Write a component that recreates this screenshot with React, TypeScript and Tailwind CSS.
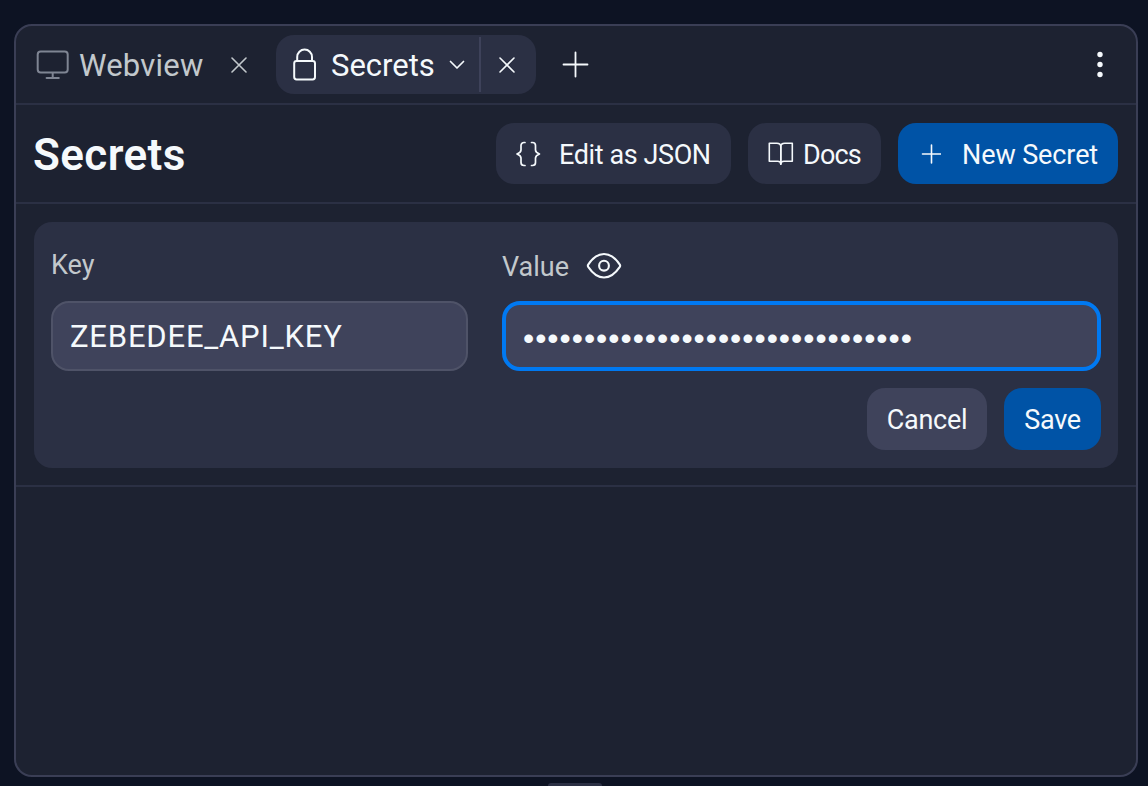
import type { ReactNode } from "react";

type LabelProps = { className: string; children: ReactNode };

function Label({ className, children }: LabelProps) {
  return <span className={`block shrink-0 whitespace-nowrap ${className}`}>{children}</span>;
}

function CloseIcon() {
  return (
    <svg width="16" height="16" viewBox="0 0 16 16" fill="none" stroke="currentColor" strokeWidth="1.6" strokeLinecap="round">
      <path d="M1 1 15 15M15 1 1 15" />
    </svg>
  );
}

function MonitorIcon() {
  return (
    <svg width="33" height="30" viewBox="0 0 33 30" fill="none" stroke="currentColor" strokeWidth="2" strokeLinecap="round">
      <rect x="1.7" y="1.4" width="30" height="21.2" rx="3" />
      <path d="M16.7 23v5M10.6 28h12.2" />
    </svg>
  );
}

function LockIcon() {
  return (
    <svg width="24" height="34" viewBox="0 0 24 34" fill="none" stroke="currentColor" strokeWidth="2">
      <rect x="1.2" y="12.9" width="20.8" height="18.6" rx="2.4" />
      <path d="M4.2 12.900V9a7.400 7.400 0 0 1 14.800 0v3.900" />
    </svg>
  );
}

function BracesIcon() {
  return (
    <svg width="25" height="26" viewBox="0 0 25 26" fill="none" stroke="currentColor" strokeWidth="1.7" strokeLinecap="round" strokeLinejoin="round">
      <path d="M9 1.500H8a3 3 0 0 0-3 3V9c0 2-1.500 3-4 4 2.500 1 4 2 4 4v4.500a3 3 0 0 0 3 3h1" />
      <path d="M15.500 1.500h1a3 3 0 0 1 3 3V9c0 2 1.500 3 4 4-2.500 1-4 2-4 4v4.500a3 3 0 0 1-3 3h-1" />
    </svg>
  );
}

function BookIcon() {
  return (
    <svg width="26" height="24" viewBox="0 0 26 24" fill="none" stroke="currentColor" strokeWidth="1.6" strokeLinecap="round" strokeLinejoin="round">
      <path d="M1.300 1.200h7.500c2.300 0 4 1.500 4 3.500v17.600c0-1.800-1.200-3-3.200-3H1.300Z" />
      <path d="M24.300 1.200h-7.500c-2.300 0-4 1.500-4 3.500v17.600c0-1.800 1.200-3 3.200-3h8.300Z" />
    </svg>
  );
}

function EyeIcon() {
  return (
    <svg width="36" height="27" viewBox="0 0 36 27" fill="none" stroke="currentColor" strokeWidth="2.1" strokeLinejoin="round">
      <path d="M2.200 14.800Q1.500 13.700 2.200 12.600C7 5.500 11.500 2 18 2S29 5.500 33.800 12.600Q34.500 13.700 33.800 14.800C29 21.900 24.500 25.500 18 25.500S7 21.900 2.200 14.800Z" />
      <circle cx="18" cy="13.700" r="4.900" />
    </svg>
  );
}

function Tabs() {
  return (
    <header className="flex h-[79px] shrink-0 items-center border-b-2 border-[#2b3044] pl-5 pr-8">
      <div className="flex h-full w-[240px] items-center text-[#c2c8cc]">
        <span className="w-[43px] text-[#7f8593]"><MonitorIcon /></span>
        <Label className="w-[152px] pt-[3px] text-[31px] tracking-[0.2px]">Webview</Label>
        <CloseIcon />
      </div>
      <div className="flex h-[59px] w-[260px] items-center rounded-[18px] bg-[#2b3044]">
        <div className="flex h-full w-[203px] items-center pl-[17px]">
          <span className="w-[38px]"><LockIcon /></span>
          <Label className="w-[117px] pt-[3px] text-[31px]">Secrets</Label>
          <svg width="17" height="10" viewBox="0 0 17 10" fill="none" stroke="currentColor" strokeWidth="1.7" strokeLinecap="round" strokeLinejoin="round">
            <path d="m2.500 1.500 6.500 6.500 6.500-6.500" />
          </svg>
        </div>
        <div className="flex h-[55px] grow items-center border-l-2 border-[#3e425a] pl-[18px]"><CloseIcon /></div>
      </div>
      <svg className="ml-[26px]" width="27" height="27" viewBox="0 0 27 27" fill="none" stroke="currentColor" strokeWidth="1.800" strokeLinecap="round">
        <path d="M13.500 1.500v24M1.500 13.500h24" />
      </svg>
      <svg className="ml-auto" width="8" height="27" viewBox="0 0 8 27" fill="currentColor">
        <circle cx="4" cy="3.500" r="2.700" /><circle cx="4" cy="13.500" r="2.700" /><circle cx="4" cy="23.500" r="2.700" />
      </svg>
    </header>
  );
}

function Toolbar() {
  return (
    <div className="flex h-[99px] shrink-0 items-center border-b-2 border-[#2b3044] pl-[17px] pr-[18px] text-[27px]">
      <h1 className="pt-[3px] text-[44px] font-semibold tracking-[0.4px]">Secrets</h1>
      <div className="ml-auto flex gap-[17px]">
        <button className="flex h-[61px] w-[235px] items-center rounded-[18px] bg-[#2b3044] pl-5">
          <span className="w-[43px]"><BracesIcon /></span>
          <Label className="pt-[3px] tracking-[-0.4px]">Edit as JSON</Label>
        </button>
        <button className="flex h-[61px] w-[133px] items-center rounded-[18px] bg-[#2b3044] pl-5">
          <span className="w-[35px]"><BookIcon /></span>
          <Label className="pt-[3px] tracking-[-0.8px]">Docs</Label>
        </button>
        <button className="flex h-[61px] w-[220px] items-center rounded-[18px] bg-[#0053a6] pl-[23px]">
          <svg className="mr-[21px]" width="20" height="20" viewBox="0 0 20 20" fill="none" stroke="currentColor" strokeWidth="1.600" strokeLinecap="round">
            <path d="M10.500 1v18M1.500 10h18" />
          </svg>
          <Label className="pt-[3px] tracking-[-0.1px]">New Secret</Label>
        </button>
      </div>
    </div>
  );
}

function SecretForm() {
  return (
    <section className="h-[283px] shrink-0 border-b-2 border-[#2b3044] px-[18px] pt-[18px]">
      <div className="flex h-[246px] flex-col rounded-[18px] bg-[#2b3044] px-[17px] text-[27px]">
        <div className="flex h-[79px] items-center text-[#c2c8cc]">
          <Label className="w-[451px] pt-[7px]">Key</Label>
          <Label className="w-[84px] pt-[11px]">Value</Label>
          <span className="pt-2 text-[#f5f9fc]"><EyeIcon /></span>
        </div>
        <div className="flex h-[70px] gap-[34px]">
          <div className="flex w-[417px] items-center rounded-[18px] border-2 border-[#4f5368] bg-[#3f435b] pl-[17px] text-[31px]">
            <Label className="pt-[3px] tracking-[0.8px]">ZEBEDEE_API_KEY</Label>
          </div>
          <div className="flex grow items-center rounded-[18px] border-4 border-[#0079f2] bg-[#3f435b] pl-[17px]">
            <Label className="pt-[3px] font-['Liberation_Sans',sans-serif] text-[32px] tracking-[0.98px]">••••••••••••••••••••••••••••••••</Label>
          </div>
        </div>
        <div className="mt-[17px] flex justify-end gap-[17px]">
          <button className="h-[62px] w-[120px] rounded-[18px] bg-[#3f435b] pt-[2px] tracking-[-0.3px]">Cancel</button>
          <button className="h-[62px] w-[97px] rounded-[18px] bg-[#0053a6] pt-[2px] tracking-[-0.3px]">Save</button>
        </div>
      </div>
    </section>
  );
}

export default function App() {
  return (
    <div className="flex h-[786px] w-[1148px] flex-col overflow-hidden bg-[#0d1323] pl-[14px] pt-6 font-['Roboto',sans-serif] text-[#f5f9fc]">
      <main className="flex h-[753px] w-[1124px] shrink-0 flex-col overflow-hidden rounded-[18px] border-2 border-[#3a3e55] bg-[#1d2231]">
        <Tabs />
        <Toolbar />
        <SecretForm />
      </main>
      <div className="ml-[534px] mt-[6px] h-2 w-[54px] shrink-0 rounded-t-[3px] bg-[#2b3044]" />
    </div>
  );
}
